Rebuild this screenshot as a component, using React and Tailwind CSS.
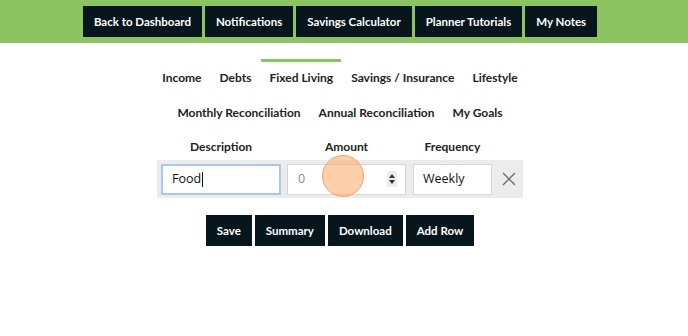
import React from "react";

const topNav = ["Back to Dashboard", "Notifications", "Savings Calculator", "Planner Tutorials", "My Notes"];
const tabs1 = ["Income", "Debts", "Fixed Living", "Savings / Insurance", "Lifestyle"];
const tabs2 = ["Monthly Reconciliation", "Annual Reconciliation", "My Goals"];
const actions = ["Save", "Summary", "Download", "Add Row"];

function DarkButton({ children, className = "" }) {
  return (
    <div className={"h-[31px] px-[11px] flex items-center bg-[#06161c] text-white text-[11.5px] font-bold " + className}>
      {children}
    </div>
  );
}

export default function App() {
  return (
    <div className="w-[688px] h-[336px] bg-white overflow-hidden" style={{ fontFamily: "Lato, 'Open Sans', sans-serif" }}>
      <div className="h-[43px] bg-[#8cc462] flex justify-center items-start pt-[6px] pr-[8px] gap-[3px]">
        {topNav.map((t) => (
          <DarkButton key={t}>{t}</DarkButton>
        ))}
      </div>

      <div className="flex flex-col items-center pr-[8px]">
        <div className="flex mt-[16px] gap-[2px]">
          {tabs1.map((t) => (
            <div
              key={t}
              className={
                "h-[34px] px-[8px] flex items-center text-[12px] font-bold text-[#222] border-t-[3px] " +
                (t === "Fixed Living" ? "border-[#8cc462]" : "border-transparent")
              }
            >
              {t}
            </div>
          ))}
        </div>
        <div className="flex mt-[1px] gap-[2px]">
          {tabs2.map((t) => (
            <div key={t} className="h-[34px] px-[8px] flex items-center text-[12px] font-bold text-[#222] border-t-[3px] border-transparent">
              {t}
            </div>
          ))}
        </div>

        <div className="w-[366px] mt-[8px]">
          <div className="flex px-[4px] h-[24px] pb-[2px] items-center text-[12px] font-bold text-[#222]">
            <div className="w-[120px] text-center">Description</div>
            <div className="w-[119px] ml-[6px] text-center">Amount</div>
            <div className="w-[79px] ml-[7px] text-center">Frequency</div>
          </div>
          <div className="relative h-[38px] bg-[#ececec] flex items-center px-[4px]" style={{ fontFamily: "'Open Sans', sans-serif" }}>
            <div className="w-[120px] h-[31px] bg-white border-2 border-[#a9c7ef] flex items-center pl-[9px] text-[12.5px] text-[#111]">
              Food<span className="inline-block w-px h-[15px] bg-[#111] ml-px"></span>
            </div>
            <div className="w-[119px] h-[31px] ml-[6px] bg-white border border-[#d6d6d6] flex items-center pl-[10px] pr-[8px] text-[12.5px] text-[#8a8a8a]">
              <span className="flex-1">0</span>
              <div className="w-[10px] h-[16px] bg-[#ececec] flex flex-col items-center justify-center gap-[2px]">
                <svg width="6" height="4" viewBox="0 0 6 4"><path d="M0 4L3 0L6 4Z" fill="#333" /></svg>
                <svg width="6" height="4" viewBox="0 0 6 4"><path d="M0 0L3 4L6 0Z" fill="#333" /></svg>
              </div>
            </div>
            <div className="w-[79px] h-[31px] ml-[7px] bg-white border border-[#d6d6d6] flex items-center pl-[9px] text-[12.5px] text-[#111]">
              Weekly
            </div>
            <svg className="ml-[10px]" width="14" height="14" viewBox="0 0 14 14">
              <path d="M1 1L13 13M13 1L1 13" stroke="#6b6b6b" strokeWidth="1.3" />
            </svg>
            <div className="absolute left-[165px] top-[-5px] w-[42px] h-[42px] rounded-full bg-[#ffa766]/55 border-[1.5px] border-[#f7a45e]"></div>
          </div>
        </div>

        <div className="flex mt-[17px] gap-[3px]">
          {actions.map((t) => (
            <DarkButton key={t}>{t}</DarkButton>
          ))}
        </div>
      </div>
    </div>
  );
}
